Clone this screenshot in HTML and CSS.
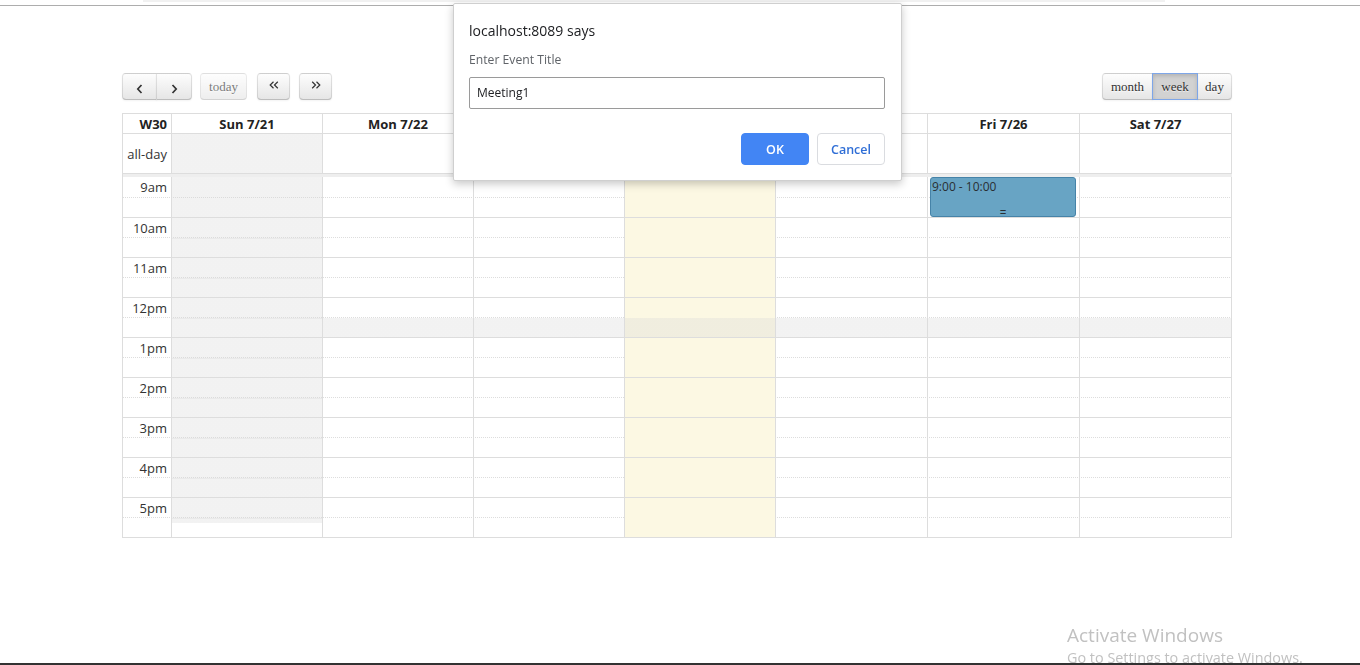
FILE: index.html
```html
<!DOCTYPE html>
<html>
<head>
<meta charset="utf-8">
<title>Calendar</title>
<link rel="stylesheet" href="styles.css">
</head>
<body>
<div class="chrome-strip"></div>
<div class="chrome-line"></div>

<div class="cal">
  <div class="toolbar">
    <div class="tb-left">
      <div class="group">
        <button class="fc-btn prev"><svg width="7" height="10" viewBox="0 0 7 10"><path d="M5.5 1 L1.8 5 L5.5 9" fill="none" stroke="#333" stroke-width="1.7"/></svg></button>
        <button class="fc-btn next"><svg width="7" height="10" viewBox="0 0 7 10"><path d="M1.5 1 L5.2 5 L1.5 9" fill="none" stroke="#333" stroke-width="1.7"/></svg></button>
      </div>
      <button class="fc-btn today" disabled>today</button>
      <button class="fc-btn dbl prev-year"><svg width="10" height="8" viewBox="0 0 10 8"><path d="M4.5 0.8 L1.2 4 L4.5 7.2 M8.8 0.8 L5.5 4 L8.8 7.2" fill="none" stroke="#333" stroke-width="1.2"/></svg></button>
      <button class="fc-btn dbl next-year"><svg width="10" height="8" viewBox="0 0 10 8"><path d="M1.2 0.8 L4.5 4 L1.2 7.2 M5.5 0.8 L8.8 4 L5.5 7.2" fill="none" stroke="#333" stroke-width="1.2"/></svg></button>
    </div>
    <div class="tb-right">
      <div class="group">
        <button class="fc-btn month">month</button>
        <button class="fc-btn week active">week</button>
        <button class="fc-btn day">day</button>
      </div>
    </div>
  </div>

  <div class="grid">
    <div class="r hdr">
      <div class="c ax">W30</div>
      <div class="c">Sun 7/21</div>
      <div class="c">Mon 7/22</div>
      <div class="c">Tue 7/23</div>
      <div class="c">Wed 7/24</div>
      <div class="c">Thu 7/25</div>
      <div class="c">Fri 7/26</div>
      <div class="c">Sat 7/27</div>
    </div>
    <div class="r allday">
      <div class="c ax">all-day</div>
      <div class="c nb"></div><div class="c"></div><div class="c"></div><div class="c tod"></div><div class="c"></div><div class="c"></div><div class="c"></div>
    </div>
    <div class="divider"></div>

    <div class="r slot first">
      <div class="c ax">9am</div>
      <div class="c nb"></div><div class="c"></div><div class="c"></div><div class="c tod"></div><div class="c"></div>
      <div class="c ev-host"><div class="event"><div class="ev-time">9:00 - 10:00</div><div class="ev-resizer">=</div></div></div>
      <div class="c"></div>
    </div>
    <div class="r slot hr">
      <div class="c ax"></div>
      <div class="c nb"></div><div class="c"></div><div class="c"></div><div class="c tod"></div><div class="c"></div><div class="c"></div><div class="c"></div>
    </div>

    <div class="r slot">
      <div class="c ax">10am</div>
      <div class="c nb"></div><div class="c"></div><div class="c"></div><div class="c tod"></div><div class="c"></div><div class="c"></div><div class="c"></div>
    </div>
    <div class="r slot hr">
      <div class="c ax"></div>
      <div class="c nb"></div><div class="c"></div><div class="c"></div><div class="c tod"></div><div class="c"></div><div class="c"></div><div class="c"></div>
    </div>

    <div class="r slot">
      <div class="c ax">11am</div>
      <div class="c nb"></div><div class="c"></div><div class="c"></div><div class="c tod"></div><div class="c"></div><div class="c"></div><div class="c"></div>
    </div>
    <div class="r slot hr">
      <div class="c ax"></div>
      <div class="c nb"></div><div class="c"></div><div class="c"></div><div class="c tod"></div><div class="c"></div><div class="c"></div><div class="c"></div>
    </div>

    <div class="r slot">
      <div class="c ax">12pm</div>
      <div class="c nb"></div><div class="c"></div><div class="c"></div><div class="c tod"></div><div class="c"></div><div class="c"></div><div class="c"></div>
    </div>
    <div class="r slot hr">
      <div class="c ax"></div>
      <div class="c nb"></div><div class="c nb"></div><div class="c nb"></div><div class="c tod nb"></div><div class="c nb"></div><div class="c nb"></div><div class="c nb"></div>
    </div>

    <div class="r slot">
      <div class="c ax">1pm</div>
      <div class="c nb"></div><div class="c"></div><div class="c"></div><div class="c tod"></div><div class="c"></div><div class="c"></div><div class="c"></div>
    </div>
    <div class="r slot hr">
      <div class="c ax"></div>
      <div class="c nb"></div><div class="c"></div><div class="c"></div><div class="c tod"></div><div class="c"></div><div class="c"></div><div class="c"></div>
    </div>

    <div class="r slot">
      <div class="c ax">2pm</div>
      <div class="c nb"></div><div class="c"></div><div class="c"></div><div class="c tod"></div><div class="c"></div><div class="c"></div><div class="c"></div>
    </div>
    <div class="r slot hr">
      <div class="c ax"></div>
      <div class="c nb"></div><div class="c"></div><div class="c"></div><div class="c tod"></div><div class="c"></div><div class="c"></div><div class="c"></div>
    </div>

    <div class="r slot">
      <div class="c ax">3pm</div>
      <div class="c nb"></div><div class="c"></div><div class="c"></div><div class="c tod"></div><div class="c"></div><div class="c"></div><div class="c"></div>
    </div>
    <div class="r slot hr">
      <div class="c ax"></div>
      <div class="c nb"></div><div class="c"></div><div class="c"></div><div class="c tod"></div><div class="c"></div><div class="c"></div><div class="c"></div>
    </div>

    <div class="r slot">
      <div class="c ax">4pm</div>
      <div class="c nb"></div><div class="c"></div><div class="c"></div><div class="c tod"></div><div class="c"></div><div class="c"></div><div class="c"></div>
    </div>
    <div class="r slot hr">
      <div class="c ax"></div>
      <div class="c nb"></div><div class="c"></div><div class="c"></div><div class="c tod"></div><div class="c"></div><div class="c"></div><div class="c"></div>
    </div>

    <div class="r slot">
      <div class="c ax">5pm</div>
      <div class="c nb"></div><div class="c"></div><div class="c"></div><div class="c tod"></div><div class="c"></div><div class="c"></div><div class="c"></div>
    </div>
    <div class="r slot hr">
      <div class="c ax"></div>
      <div class="c nb-end"></div><div class="c"></div><div class="c"></div><div class="c tod"></div><div class="c"></div><div class="c"></div><div class="c"></div>
    </div>
  </div>
</div>

<div class="dialog">
  <div class="dlg-title">localhost:8089 says</div>
  <div class="dlg-label">Enter Event Title</div>
  <div class="dlg-input">Meeting1</div>
  <div class="dlg-actions">
    <button class="dlg-btn ok">OK</button>
    <button class="dlg-btn cancel">Cancel</button>
  </div>
</div>

<div class="watermark">
  <div class="wm-1">Activate Windows</div>
  <div class="wm-2">Go to Settings to activate Windows.</div>
</div>
<div class="taskbar"></div>
</body>
</html>
```
FILE: styles.css
```css
* { box-sizing: border-box; }
html, body { margin: 0; padding: 0; background: #fff; }
body {
  font-family: "Open Sans", "Noto Sans", sans-serif;
  color: #333;
  height: 665px;
  overflow: hidden;
}

.chrome-strip { height: 2px; width: 1022px; margin-left: 143px; background: #f1f1f1; }
.chrome-line { height: 1px; margin-top: 3px; background: #adadad; }

.cal { width: 1110px; margin: 67px 0 0 122px; }

/* toolbar */
.toolbar { display: flex; justify-content: space-between; height: 27px; margin-bottom: 13px; }
.tb-left, .tb-right { display: flex; }
.group { display: flex; }

.fc-btn {
  height: 27px;
  padding: 0;
  display: flex;
  align-items: center;
  justify-content: center;
  border: 1px solid;
  border-color: rgba(0,0,0,.1) rgba(0,0,0,.1) rgba(0,0,0,.25);
  border-radius: 4px;
  background-color: #f5f5f5;
  background-image: linear-gradient(to bottom, #fdfdfd, #e6e6e6);
  box-shadow: inset 0 1px 0 rgba(255,255,255,.2), 0 1px 2px rgba(0,0,0,.05);
  font: 13px "Liberation Serif", "Times New Roman", serif;
  color: #333;
  text-shadow: 0 1px 1px rgba(255,255,255,.75);
}
.group .fc-btn { border-radius: 0; }
.group .fc-btn:first-child { border-radius: 4px 0 0 4px; }
.group .fc-btn:last-child { border-radius: 0 4px 4px 0; }
.group .fc-btn + .fc-btn { margin-left: -1px; }

.prev { width: 35px; }
.prev svg, .next svg { margin-top: 4px; }
.next { width: 36px; }
.today { width: 47px; margin-left: 8px; opacity: .65; box-shadow: none; }
.prev-year { width: 33px; margin-left: 10px; }
.next-year { width: 33px; margin-left: 9px; }
.dbl svg { margin-top: -3px; }
.month { width: 51px; }
.week { width: 46px; }
.day { width: 35px; }
.fc-btn.active {
  position: relative;
  background-image: none;
  background-color: #d2d2d2;
  border-color: #7ea6e8;
  box-shadow: inset 0 2px 4px rgba(0,0,0,.15), 0 1px 2px rgba(0,0,0,.05);
}

/* grid */
.grid { border-left: 1px solid #ddd; border-top: 1px solid #ddd; }
.r {
  display: grid;
  grid-template-columns: 49px 151px 151px 151px 151px 152px 152px 152px;
}
.c { border-right: 1px solid #ddd; }
.ax { text-align: right; padding-right: 4px; font-size: 13px; white-space: nowrap; }

.hdr { height: 20px; border-bottom: 1px solid #ddd; }
.hdr .c { font-weight: 700; font-size: 13px; line-height: 20px; text-align: center; color: #222; }
.hdr .ax { text-align: right; }

.allday { height: 40px; border-bottom: 1px solid #ddd; }
.allday .ax { display: flex; align-items: center; justify-content: flex-end; }

.divider { height: 3px; background: #eee; }

.slot { height: 20px; border-bottom: 1px dotted #ddd; }
.slot.first { height: 21px; }
.slot.hr { border-bottom: 1px solid #ddd; }
.slot .ax { line-height: 21px; }
.slot.first .ax { line-height: 21px; }

.tod { background-color: #fcf8e3; }
.nb { background-image: linear-gradient(rgba(215,215,215,.32), rgba(215,215,215,.32)); }
.nb-end { background-image: linear-gradient(to bottom, rgba(215,215,215,.32) 0, rgba(215,215,215,.32) 5px, transparent 5px); }

/* event */
.ev-host { position: relative; }
.event {
  position: absolute;
  left: 2px;
  right: 3px;
  top: 0;
  height: 40px;
  z-index: 2;
  background: #68a4c4;
  border: 1px solid #4683a8;
  border-radius: 3px;
  padding: 2px 1px 0;
  color: #2a2f33;
  font-size: 12px;
  line-height: 14px;
}
.ev-time { white-space: nowrap; }
.ev-resizer {
  position: absolute;
  left: 0;
  right: 0;
  bottom: -1px;
  height: 8px;
  line-height: 8px;
  font-size: 11px;
  font-family: "Liberation Mono", monospace;
  text-align: center;
  color: #2a2f33;
}

/* dialog */
.dialog {
  position: fixed;
  left: 453px;
  top: 3px;
  width: 449px;
  z-index: 10;
  background: #fff;
  border: 1px solid #cfcfcf;
  border-radius: 2px;
  box-shadow: 0 3px 8px rgba(0,0,0,.22);
  padding: 17px 16px 15px 15px;
  font-family: "Open Sans", "Noto Sans", sans-serif;
}
.dlg-title { font-size: 14px; line-height: 20px; color: #202124; }
.dlg-label { margin-top: 10px; font-size: 12.2px; line-height: 17px; color: #5f6368; }
.dlg-input {
  margin-top: 9px;
  height: 32px;
  border: 1px solid #9a9a9a;
  border-radius: 2px;
  padding: 0 7px;
  font-size: 12px;
  line-height: 30px;
  color: #202124;
}
.dlg-actions { margin-top: 24px; display: flex; justify-content: flex-end; gap: 8px; }
.dlg-btn {
  width: 68px;
  height: 32px;
  border-radius: 4px;
  font-family: "Open Sans", "Noto Sans", sans-serif;
  font-size: 12.5px;
  font-weight: 600;
  padding: 0;
}
.ok { background: #4285f4; border: 1px solid #4285f4; color: #fff; }
.cancel { background: #fff; border: 1px solid #dadce0; color: #2f6ed6; }

/* windows watermark */
.watermark {
  position: fixed;
  left: 1067px;
  top: 623px;
  color: #c1c1c1;
  font-family: "Open Sans", "Noto Sans", sans-serif;
  white-space: nowrap;
}
.wm-1 { font-size: 19px; line-height: 24px; }
.wm-2 { margin-top: 2px; font-size: 14.4px; line-height: 18px; }
.taskbar { position: fixed; left: 0; right: 0; bottom: 0; height: 2px; background: #323232; z-index: 20; }
```
